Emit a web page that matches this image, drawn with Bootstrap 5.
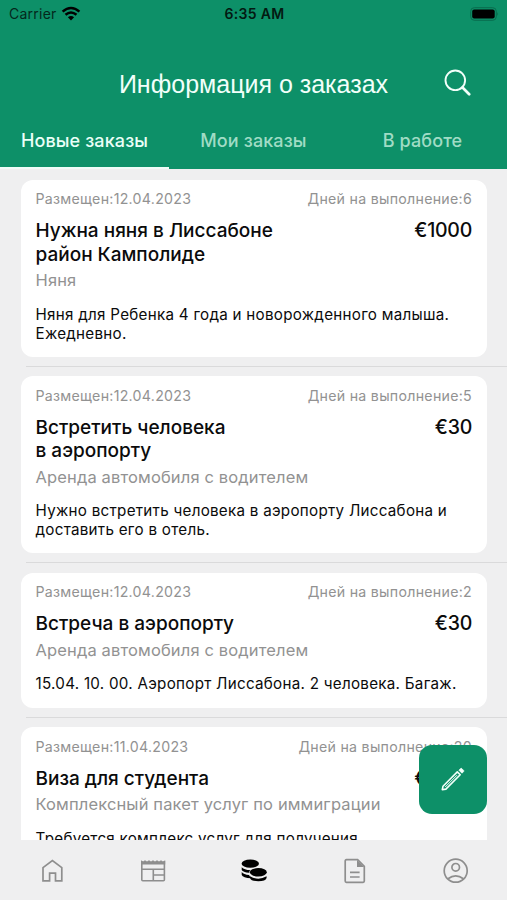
<!DOCTYPE html>
<html lang="ru">
<head>
<meta charset="utf-8">
<meta name="viewport" content="width=device-width, initial-scale=1">
<title>Информация о заказах</title>
<link href="https://cdn.jsdelivr.net/npm/bootstrap@5.3.0/dist/css/bootstrap.min.css" rel="stylesheet">
<style>
body{font-family:Inter,"Liberation Sans",sans-serif;background:#efeff0;color:#0b0b0b}
.phone{height:900px;overflow:hidden}
.app-head{background:#0d9068;height:169px}
.status{height:27px;font-size:14px;line-height:27px;color:#04281c;padding:0 7px 0 9px}
.status .carrier{letter-spacing:.25px}
.status .clock{font-weight:600;letter-spacing:.3px;color:#031a12}
.title-row{height:84px}
.screen-title{font-family:"Liberation Sans",sans-serif;font-size:25px;line-height:30px;padding-top:42px;color:#f2fffa;white-space:nowrap}
.search-cell{padding:42px 36px 0 0}
.tabs-row{height:58px}
.tab-link{font-size:18px;font-weight:500;letter-spacing:.12px;line-height:24px;padding-top:18px;color:#a0dcc5;white-space:nowrap;text-align:center;border-bottom:2px solid transparent}
.tab-link.active{color:#eafff7;border-color:#eefcf7}
.feed{height:671px;padding-top:10.5px}
.order{border:0;border-radius:12px;margin:0 20px 0 20.5px;padding:9.5px 15px 14.2px;color:inherit}
.order-meta{font-size:14.2px;line-height:19px;color:#929292;letter-spacing:.27px;white-space:nowrap}
.order-title,.order-price{font-weight:500;line-height:23.5px;margin-top:11px;white-space:nowrap}
.order-title{font-size:19px}
.order-price{font-size:19.5px;letter-spacing:-.25px}
.order-kind{font-size:16.5px;line-height:20px;letter-spacing:.14px;color:#929292;margin-top:4px;white-space:nowrap}
.order-text{font-size:15.2px;line-height:19px;letter-spacing:.27px;margin-top:14.5px;white-space:nowrap}
.order-gap{height:19.5px;padding-top:9px;margin-left:26px}
.order-gap div{height:1px;background:#dadadb}
.compose{position:absolute;right:20px;top:745px;width:68.5px;height:68.5px;border-radius:13px;background:#0d9068;border:0}
.tabbar{height:60px;background:#efeff0;padding:2px 0 0 1px}
</style>
<script src="https://cdn.jsdelivr.net/npm/bootstrap@5.3.0/dist/js/bootstrap.bundle.min.js"></script>
</head>
<body>
<div class="phone position-relative d-flex flex-column">
<header class="app-head flex-shrink-0">
  <div class="status row g-0">
    <div class="col d-flex align-items-center"><span class="carrier">Carrier</span>
      <svg class="ms-1" width="20" height="16" viewBox="0 0 20 16" fill="none" stroke="#000" stroke-width="2.5"><path d="M1.6 5.6Q10-1.700 18.400 5.600M4.500 8.800Q10 4.100 15.500 8.800"/><path d="M6.900 11.300Q10 8.600 13.100 11.300L10 14.400Z" fill="#000" stroke="none"/></svg></div>
    <div class="col text-center clock">6:35 AM</div>
    <div class="col d-flex align-items-center justify-content-end">
      <svg width="30" height="14" viewBox="0 0 30 14"><rect x=".7" y=".7" width="25.6" height="12.6" rx="3.6" fill="none" stroke="#096c4e"/><rect x="2.2" y="2.5" width="22.5" height="9" rx="2" fill="#000"/><path d="M27.300 5v4Q29 7 27.300 5" fill="#096c4e"/></svg></div>
  </div>
  <div class="title-row row g-0">
    <div class="col-2"></div>
    <h1 class="col-8 screen-title text-center mb-0 fw-normal">Информация о заказах</h1>
    <div class="col-2 search-cell d-flex justify-content-end align-items-start"><svg class="flex-shrink-0" width="27" height="27" viewBox="0 0 27 27" fill="none" stroke="#f2fffa" stroke-width="1.9"><circle cx="11.300" cy="11.300" r="9.800"/><path d="M18.500 18.500l6.700 6.700" stroke-width="2.700" stroke-linecap="round"/></svg></div>
  </div>
  <nav class="tabs-row row g-0">
    <div class="col-4 tab-link active">Новые заказы</div><div class="col-4 tab-link">Мои заказы</div><div class="col-4 tab-link">В работе</div>
  </nav>
</header>
<main class="feed flex-shrink-0 overflow-hidden">
  <article class="card order">
    <div class="order-meta d-flex justify-content-between"><span>Размещен:12.04.2023</span><span>Дней на выполнение:6</span></div>
    <div class="d-flex justify-content-between"><div class="order-title">Нужна няня в Лиссабоне<br>район Камполиде</div><div class="order-price">€1000</div></div>
    <div class="order-kind">Няня</div>
    <div class="order-text">Няня для Ребенка 4 года и новорожденного малыша.<br>Ежедневно.</div>
  </article>
  <div class="order-gap"><div></div></div>
  <article class="card order">
    <div class="order-meta d-flex justify-content-between"><span>Размещен:12.04.2023</span><span>Дней на выполнение:5</span></div>
    <div class="d-flex justify-content-between"><div class="order-title">Встретить человека<br>в аэропорту</div><div class="order-price">€30</div></div>
    <div class="order-kind">Аренда автомобиля с водителем</div>
    <div class="order-text">Нужно встретить человека в аэропорту Лиссабона и<br>доставить его в отель.</div>
  </article>
  <div class="order-gap"><div></div></div>
  <article class="card order">
    <div class="order-meta d-flex justify-content-between"><span>Размещен:12.04.2023</span><span>Дней на выполнение:2</span></div>
    <div class="d-flex justify-content-between"><div class="order-title">Встреча в аэропорту</div><div class="order-price">€30</div></div>
    <div class="order-kind">Аренда автомобиля с водителем</div>
    <div class="order-text">15.04. 10. 00. Аэропорт Лиссабона. 2 человека. Багаж.</div>
  </article>
  <div class="order-gap"><div></div></div>
  <article class="card order">
    <div class="order-meta d-flex justify-content-between"><span>Размещен:11.04.2023</span><span>Дней на выполнение:20</span></div>
    <div class="d-flex justify-content-between"><div class="order-title">Виза для студента</div><div class="order-price">€1000</div></div>
    <div class="order-kind">Комплексный пакет услуг по иммиграции</div>
    <div class="order-text">Требуется комплекс услуг для получения</div>
  </article>
</main>
<button class="compose d-flex align-items-center justify-content-center p-0" aria-label="Создать">
  <svg width="26" height="26" viewBox="0 0 26 26" fill="none" stroke="#f2fffa" stroke-width="1.600" stroke-linejoin="round"><path d="M2.300 23.700l.7-3.500L17.300 5.900l2.900 2.900L5.900 23.100Z"/><path d="M5.200 21L17 9.200" stroke-width="1"/><path d="M19 4.200l1.600-1.600q.6-.6 1.200 0l1.800 1.800q.6.6 0 1.200L22 7.200Z" fill="#f2fffa" stroke-width=".8"/></svg>
</button>
<footer class="tabbar flex-shrink-0 row g-0 align-items-center text-center">
  <div class="col"><svg width="26" height="26" viewBox="0 0 26 26" fill="none" stroke="#8e8e8e" stroke-width="1.700"><path d="M4 22.800V9.600L13.400 2.600l9.400 7v13.200h-6.300v-7.700h-5.900v7.700Z"/></svg></div>
  <div class="col"><svg width="26" height="26" viewBox="0 0 26 26" fill="none" stroke="#8e8e8e" stroke-width="1.600"><path d="M1.800 3v18.800q0 1 1 1h20.600q1 0 1-1V3M1.500 11.300h23M13.300 11.300v11.500M13.300 17h11.200"/><path d="M1 2.200l2 1.200 2-1.200 2 1.200 2-1.200 2 1.200 2-1.200 2 1.200 2-1.200 2 1.200 2-1.200 2 1.200 2.200-1.200V6.600H1Z" fill="#8e8e8e" stroke="none"/></svg></div>
  <div class="col"><svg width="28" height="26" viewBox="0 0 28 26"><ellipse cx="10.300" cy="5.700" rx="8.700" ry="4.100"/><path d="M1.700 9.200Q4.500 12 10 12l-1 2.800Q3 14.300 1.700 12ZM1.700 14Q3.800 16.600 9 17l2 3.300Q3 20 1.700 17Z"/><ellipse cx="18.300" cy="14.300" rx="8.500" ry="4.200"/><path d="M10 18.300q8.300 4.800 16.600 0v1.600q-1 3.300-8.300 3.300T10 19.900Z"/></svg></div>
  <div class="col"><svg width="26" height="26" viewBox="0 0 26 26" fill="none" stroke="#8e8e8e" stroke-width="1.700"><path d="M4.400 1.700h11.200l6.700 6.700v14.700q0 1.200-1.200 1.200H4.400q-1.200 0-1.200-1.200V2.900q0-1.200 1.200-1.200ZM8 14.300h9.600M8 19h9.600"/><path d="M15 2v7h7Z" fill="#8e8e8e" stroke="none"/></svg></div>
  <div class="col"><svg width="26" height="26" viewBox="0 0 26 26" fill="none" stroke="#8e8e8e" stroke-width="1.700"><circle cx="12.700" cy="12.700" r="11.500"/><circle cx="12.700" cy="9.300" r="3.800"/><path d="M5 20.800q7.700-5.800 15.400 0"/></svg></div>
</footer>
</div>
</body>
</html>
